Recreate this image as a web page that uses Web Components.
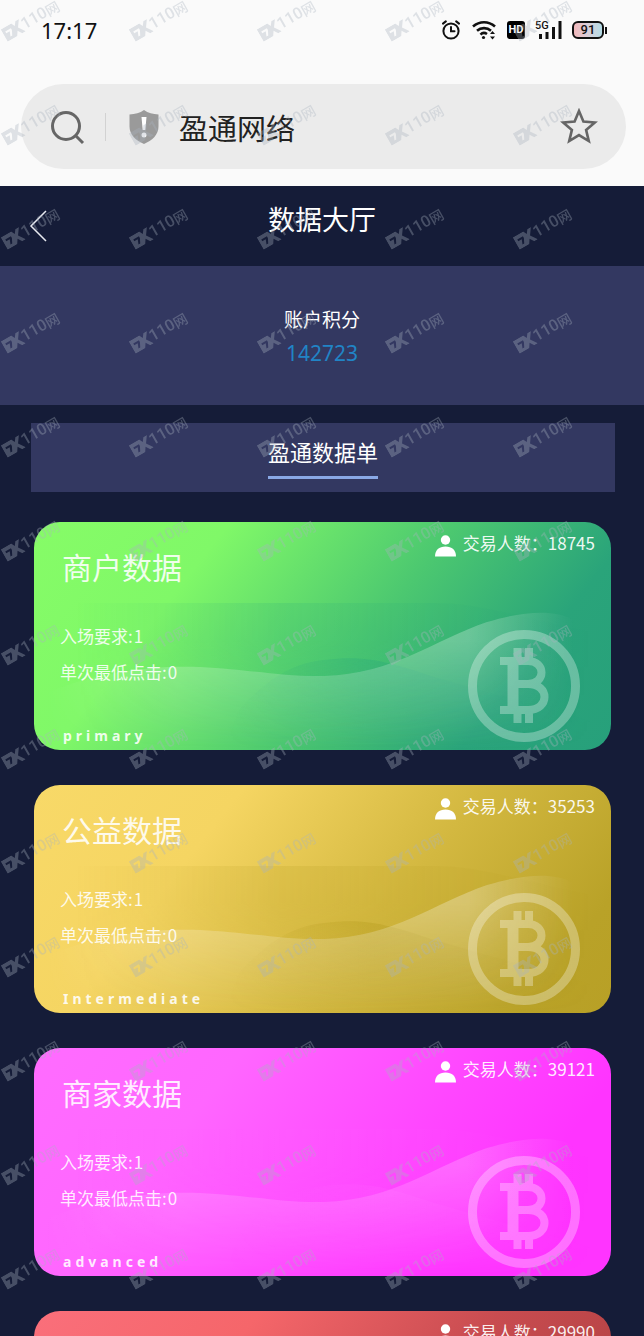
<!DOCTYPE html>
<html lang="zh-CN">
<head>
<meta charset="utf-8">
<meta name="viewport" content="width=device-width, initial-scale=1">
<title>数据大厅</title>
<style>
  body { margin: 0; background: #151c38; font-family: "Noto Sans CJK SC", sans-serif; }
</style>
</head>
<body>
<app-shell>
  <status-bar slot="top" time="17:17"></status-bar>
  <address-bar slot="top" value="盈通网络"></address-bar>
  <page-header>数据大厅</page-header>
  <score-panel label="账户积分">142723</score-panel>
  <tab-panel>盈通数据单</tab-panel>
  <card-list>
    <data-card tone="green" name="商户数据" count="18745" entry="1" click="0">primary</data-card>
    <data-card tone="gold" name="公益数据" count="35253" entry="1" click="0">Intermediate</data-card>
    <data-card tone="pink" name="商家数据" count="39121" entry="1" click="0">advanced</data-card>
    <data-card tone="red" count="29990"></data-card>
  </card-list>
  <water-mark slot="overlay"></water-mark>
</app-shell>

<script>
const define = (name, render) => customElements.define(name, class extends HTMLElement {
  constructor() {
    super();
    this.attachShadow({ mode: 'open' });
  }
  connectedCallback() {
    const t = document.createElement('template');
    t.innerHTML = render(this);
    this.shadowRoot.replaceChildren(t.content.cloneNode(true));
  }
});

define('app-shell', () => `
  <style>
    :host { display: flex; flex-direction: column; height: 100vh; position: relative; overflow: hidden; }
    .top { background: #fafafa; padding-bottom: 17px; flex: none; }
    main { flex: 1; min-height: 0; overflow: hidden auto; scrollbar-width: none; }
  </style>
  <div class="top"><slot name="top"></slot></div>
  <main><slot></slot></main>
  <slot name="overlay"></slot>`);

define('status-bar', el => `
  <style>
    :host { display: flex; justify-content: space-between; align-items: center; height: 60px;
      padding: 0 37px 0 41px; margin-bottom: 24px; color: #111; font: 22px/30px "Noto Sans", sans-serif; }
    .icons { display: flex; align-items: center; gap: 10px; }
    svg { display: block; }
    .hd { background: #000; color: #fff; border-radius: 3px; width: 18px; height: 18px; text-align: center;
      font: bold 11px/18px "Roboto", sans-serif; }
    .net { display: grid; }
    .net > * { grid-area: 1 / 1; }
    .net span { font: 500 11px/12px "Roboto", sans-serif; align-self: start; }
    .battery { display: flex; align-items: center; }
    .battery b { box-sizing: border-box; width: 32px; height: 18px; border: 2px solid #111; border-radius: 6px; text-align: center;
      background: linear-gradient(90deg, #f2b8bb, #d9ced8 50%, #b4dce6); font: 500 13px/14px "Roboto", sans-serif; }
    .battery i { width: 2px; height: 7px; background: #111; margin-left: 1px; }
  </style>
  <time>${el.getAttribute('time')}</time>
  <div class="icons">
    <svg width="20" height="20" viewBox="0 0 20 20" fill="none" stroke="#111" stroke-width="2" stroke-linecap="round">
      <circle cx="10" cy="11" r="7.6"/><path d="M10 7v4.3h3.5M2 3.6 4.8 1.4M18 3.6 15.2 1.4"/></svg>
    <svg width="26" height="20" viewBox="0 0 26 20" fill="none" stroke="#111" stroke-width="2.6">
      <path d="M2 6.5C8.500 .8 17.500 .8 24 6.500M6 10.800c4-3.600 10-3.600 14 0M9.500 14.600c1.700-1.800 4.500-1.900 6.500-.6"/>
      <circle cx="12.500" cy="17.500" r="1.600" fill="#111" stroke="none"/>
      <path d="M19 14 21.500 11l2.500 3zM19 16.500l2.500 3 2.500-3z" fill="#111" stroke="none"/></svg>
    <span class="hd">HD</span>
    <div class="net"><span>5G</span>
      <svg width="27" height="20" viewBox="0 0 27 20" fill="#111"><path d="M4 14h3v5H4zM10.500 12h3v7h-3zM17 7h3v12h-3zM23.500 1h3v18h-3z"/></svg></div>
    <div class="battery"><b>91</b><i></i></div>
  </div>`);

define('address-bar', el => `
  <style>
    :host { display: flex; align-items: center; height: 85px; margin: 0 18px 0 21px; padding: 0 27px 0 26px;
      border-radius: 43px; background: #ebebeb; }
    button { border: 0; padding: 0; background: none; width: 40px; height: 40px; display: grid; place-items: center; }
    .rule { width: 1px; height: 28px; background: #d2d2d2; margin: 0 21px 0 18px; }
    input { flex: 1; min-width: 0; border: 0; outline: 0; padding: 0; margin-left: 18px; background: none; color: #222;
      font: 29px/40px "Noto Sans CJK SC", sans-serif; }
  </style>
  <button aria-label="搜索"><svg width="36" height="36" viewBox="0 0 36 36" fill="none" stroke="#666" stroke-width="3">
    <circle cx="17" cy="17" r="13.500"/><path d="m26 26 8 8"/></svg></button>
  <span class="rule"></span>
  <svg width="34" height="36" viewBox="0 0 34 36"><path d="M17 1c4 3 9 4 14.500 4.500v12C31.500 26 25 31.500 17 35 9 31.500 2.500 26 2.500 17.500v-12C8 5 13 4 17 1z" fill="#9a9a9a"/>
    <path d="M14.500 8h5l-1.200 13h-2.600zM17 23.500a2.500 2.500 0 1 1 0 5 2.500 2.500 0 0 1 0-5z" fill="#fff"/></svg>
  <input type="text" aria-label="网址" value="${el.getAttribute('value')}">
  <button aria-label="收藏"><svg width="38" height="38" viewBox="0 0 38 38" fill="none" stroke="#666" stroke-width="2.600">
    <path d="m19 3 4.400 10.600 11.400.9-8.700 7.400 2.700 11.200L19 27.100l-9.800 6 2.700-11.200-8.700-7.400 11.400-.9z"/></svg></button>`);

define('page-header', () => `
  <style>
    :host { display: grid; grid-template-columns: 1fr auto 1fr; align-items: center; height: 80px; background: #151c38; color: #fff; }
    button { border: 0; padding: 0; background: none; width: 24px; height: 40px; margin-left: 26px; display: grid; place-items: center; }
    h1 { margin: 0; align-self: start; font: 27px/66px "Noto Sans CJK SC", sans-serif; }
  </style>
  <button aria-label="返回"><svg width="20" height="34" viewBox="0 0 20 34" fill="none" stroke="#e8eaf0" stroke-width="1.500"><path d="M18 2 3 17l15 15"/></svg></button>
  <h1><slot></slot></h1>`);

define('score-panel', el => `
  <style>
    :host { display: block; background: #333861; padding: 35px 0 34px; text-align: center; color: #fff; }
    p { margin: 0; font-size: 19px; line-height: 35px; }
    .value { color: #2184c6; font-family: "Noto Sans", sans-serif; font-size: 21px; }
  </style>
  <p>${el.getAttribute('label')}</p><p class="value"><slot></slot></p>`);

define('tab-panel', () => `
  <style>
    :host { display: flex; justify-content: center; margin: 18px 29px 30px 31px; padding: 8px 0 13px; background: #333861; }
    button { border: 0; border-bottom: 3px solid #8aa9e6; background: none; color: #fff; padding: 0 0 5px;
      font: 22px/40px "Noto Sans CJK SC", sans-serif; }
  </style>
  <button><slot></slot></button>`);

define('card-list', () => `
  <style>:host { display: flex; flex-direction: column; gap: 35px; padding: 0 33px 35px 34px; }</style>
  <slot></slot>`);

const tones = {
  green: ['#86fc67 0%, #80f868 26%, #4cc870 56%, #2aa47a 80%, #27a07b', '#1fa080', .26],
  gold: ['#f8d968 0%, #f5d562 28%, #d3b840 60%, #b9a228 88%, #b8a026', '#a89010', .28],
  pink: ['#ff6cff 0%, #ff66ff 28%, #ff46ff 60%, #ff34ff 80%, #ff34ff', '#ff60ff', .2],
  red: ['#fa6f7b 0%, #f5666a 30%, #c84c50 62%, #a83c3c', '#a03030', .25]
};

define('data-card', el => {
  const a = n => el.getAttribute(n);
  const [stops, deep, light] = tones[a('tone')];
  return `
  <style>
    :host { display: block; position: relative; box-sizing: border-box; height: 228px; flex: none; overflow: hidden;
      border-radius: 26px; padding: 9px 16px 0 26px; color: rgba(255,255,255,.88);
      background: linear-gradient(128deg, ${stops}); }
    .art, .coin { position: absolute; display: block; }
    .art { inset: 0; width: 100%; height: 100%; }
    .coin { right: 31px; bottom: 8px; }
    .head { position: relative; display: flex; justify-content: space-between; align-items: flex-start; height: 55px; }
    h2 { margin: 17px 0 0 2px; font: 30px/36px "Noto Sans CJK SC", sans-serif; }
    .count { display: flex; gap: 7px; margin-left: auto; font-size: 17px; line-height: 24px; color: rgba(255,255,255,.93); }
    .count svg { margin-top: 4px; }
    dl { position: relative; margin: 32px 0 34px; font-size: 17px; line-height: 36px; }
    dl div { display: flex; }
    dd { margin: 0 0 0 1px; }
    .level { position: relative; margin: 0 0 0 3px; font: bold 14px/24px "Noto Sans", sans-serif; letter-spacing: 4px; }
  </style>
  <svg class="art" viewBox="0 0 577 228" preserveAspectRatio="none" aria-hidden="true">
    <defs>
      <linearGradient id="w" x1="0" y1="0" x2="1" y2="0"><stop offset="0" stop-color="#fff" stop-opacity="0"/><stop offset=".25" stop-color="#fff" stop-opacity="${light}"/><stop offset=".8" stop-color="#fff" stop-opacity="${light}"/><stop offset="1" stop-color="#fff" stop-opacity="0"/></linearGradient>
      <linearGradient id="f" x1="0" y1="0" x2="0" y2="1"><stop offset=".3" stop-color="#fff"/><stop offset="1" stop-color="#000"/></linearGradient>
      <linearGradient id="d" x1="0" y1="0" x2="1" y2="0"><stop offset="0" stop-color="${deep}" stop-opacity="0"/><stop offset=".4" stop-color="${deep}" stop-opacity=".3"/><stop offset="1" stop-color="${deep}" stop-opacity="0"/></linearGradient>
      <mask id="m"><rect y="70" width="577" height="158" fill="url(#f)"/></mask>
    </defs>
    <path d="M40 81H400C450 81 500 100 560 110V228H40z" fill="url(#d)" opacity=".5" mask="url(#m)"/>
    <path d="M205 188C235 155 260 141 290 138 325 134 345 136 400 155L560 200V228H190z" fill="url(#d)" mask="url(#m)"/>
    <path d="M10 172C60 150 120 143 166 145 220 148 250 155 290 154 360 152 400 118 453 100 490 89 520 87 540 98V228H10z" fill="url(#w)" mask="url(#m)"/>
  </svg>
  <svg class="coin" width="112" height="112" viewBox="0 0 112 112" aria-hidden="true">
    <g fill="none" stroke="#fff" stroke-width="8" opacity=".3">
      <circle cx="56" cy="56" r="51.500" stroke-width="9"/>
      <path d="M32 31H60C78 31 78 54 60 54H46M60 54C82 54 82 80 60 80H32M49.500 18V30M61 18V30M49.500 81V93M61 81V93"/>
      <path d="M45 32V80" stroke-width="11"/>
    </g>
  </svg>
  <div class="head">
    ${a('name') ? `<h2>${a('name')}</h2>` : ''}
    <div class="count"><svg width="21" height="22" viewBox="0 0 21 22" fill="#fff"><circle cx="10.500" cy="5" r="4.700"/><path d="M0 21.500C0 15 4 11.500 10.500 11.500S21 15 21 21.500z"/></svg><span>交易人数：${a('count')}</span></div>
  </div>
  ${a('entry') ? `<dl><div><dt>入场要求:</dt><dd>${a('entry')}</dd></div><div><dt>单次最低点击:</dt><dd>${a('click')}</dd></div></dl>
  <p class="level"><slot></slot></p>` : ''}`;
});

define('water-mark', () => `
  <style>
    :host { position: absolute; inset: 0; overflow: hidden; pointer-events: none; display: grid;
      grid-template-columns: repeat(auto-fill, 128px); grid-auto-rows: 104px; opacity: .34; color: #a9b3bf; }
    div { display: flex; align-items: center; justify-content: center; width: 62px; height: 40px; }
    span { display: flex; align-items: center; transform: rotate(-30deg); font: 500 16px/16px "Roboto", "Noto Sans CJK SC", sans-serif; white-space: nowrap; }
    small { font: 500 14px/16px "Noto Sans CJK SC", sans-serif; }
    svg { flex: none; }
  </style>
  ${'<div><span><svg width="21" height="14" viewBox="0 0 21 14" fill="currentColor"><path fill-rule="evenodd" d="M0 0H12L14 4 17 0H21L16 7 21 14H17L14 9.500 11 14H0zM3 4V6H7L5 11H7L9.500 6V4z"/></svg>110<small>网</small></span></div>'.repeat(65)}`);
</script>
</body>
</html>
